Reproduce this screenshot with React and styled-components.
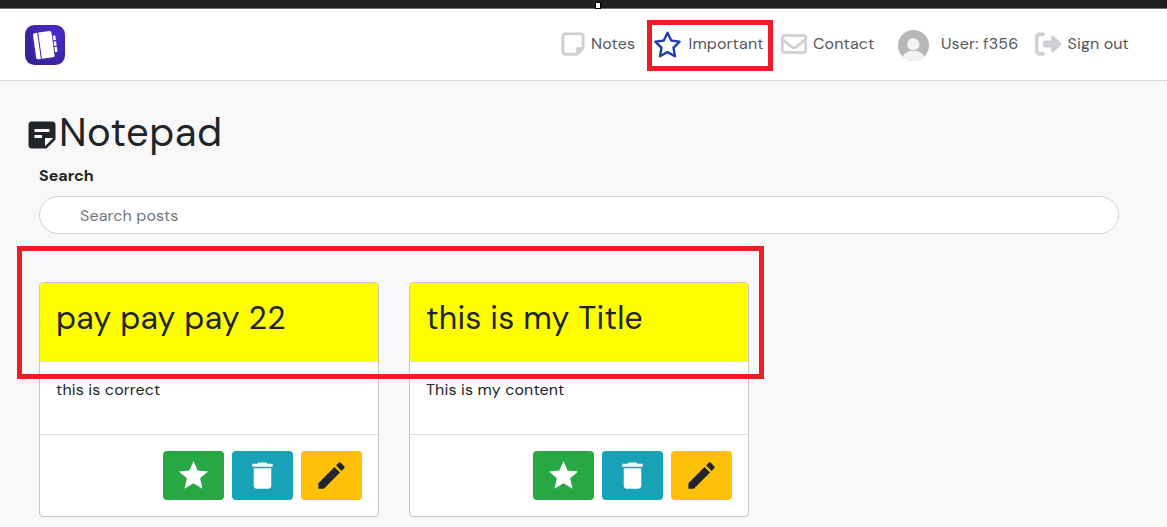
import React from "react";
import styled, { createGlobalStyle } from "styled-components";
import { FaRegNoteSticky, FaRegStar, FaRegEnvelope, FaRightFromBracket } from "react-icons/fa6";
import { MdStickyNote2, MdStar, MdDelete, MdEdit } from "react-icons/md";

const GlobalStyle = createGlobalStyle`
  *, *::before, *::after { box-sizing: border-box; }
  html, body { margin: 0; background: #f8f8f8; overflow: hidden; }
  body {
    font-family: "DM Sans", Lato, "Open Sans", sans-serif;
    font-optical-sizing: none;
    font-size: 16px;
    line-height: 24px;
    color: #212529;
  }
  h1, h2, p { margin: 0; font-weight: 400; }
`;

const Page = styled.div`
  position: relative;
  height: 527px;
  overflow: hidden;
  background: #f8f8f8;
`;

const TopStrip = styled.div`
  height: 9px;
  background: #202020;
  border-bottom: 1px solid #6f6f6f;
`;

const Handle = styled.span`
  position: absolute;
  top: 2px;
  left: 595px;
  width: 6px;
  height: 7px;
  border: 1px solid #000;
  background: #fff;
`;

const Navbar = styled.header`
  display: flex;
  align-items: center;
  justify-content: space-between;
  height: 72px;
  padding: 1px 38px 0 25px;
  background: #fff;
  border-bottom: 1px solid #d9d9e0;
`;

const Nav = styled.nav`
  display: flex;
  align-items: center;
  height: 31px;
`;

const NavItem = styled.a`
  display: flex;
  align-items: center;
  flex: none;
  width: ${(p) => p.$width}px;
  gap: ${(p) => p.$gap}px;
  color: #55565a;
  letter-spacing: 0.14px;
  white-space: nowrap;
`;

const NavIcon = styled.span`
  display: flex;
  flex: none;
  margin-top: -2px;
  color: ${(p) => (p.$active ? "#1e40af" : "#cfcfd4")};

  path { stroke-width: ${(p) => (p.$active ? 0 : 8)}px; }
`;

const NavText = styled.span`
  margin-top: -2px;
`;

const Main = styled.main`
  padding: 27px 48px 0 39px;
`;

const Heading = styled.div`
  display: flex;
  align-items: center;
  height: 48px;
  margin-left: -15.5px;

  svg { margin-top: 6px; }
`;

const Title = styled.h1`
  margin-left: -0.5px;
  font-size: 40px;
  line-height: 48px;
  letter-spacing: 0.45px;
`;

const Label = styled.label`
  display: block;
  height: 24px;
  margin: 8px 0;
  font-weight: 700;
`;

const SearchInput = styled.input`
  display: block;
  width: 100%;
  height: 38px;
  padding: 0 40px;
  border: 1px solid #ced4da;
  border-radius: 25px;
  background: #fff;
  font: inherit;
  font-optical-sizing: inherit;
  letter-spacing: 0.14px;
  outline: none;

  &::placeholder { color: #6c757d; opacity: 1; }
`;

const Cards = styled.section`
  display: grid;
  grid-template-columns: 340px 340px;
  gap: 30px;
  margin-top: 48px;
`;

const Card = styled.article`
  display: flex;
  flex-direction: column;
  height: 235px;
  border: 1px solid #c6c6c6;
  border-radius: 4px;
  background: #fff;
  overflow: hidden;
`;

const CardHeader = styled.div`
  height: 79px;
  padding: 16px;
  background: #ff0;
  border-bottom: 1px solid #dfdfdf;
`;

const CardTitle = styled.h2`
  font-size: 32px;
  line-height: 38px;
  letter-spacing: 0.23px;
  white-space: nowrap;
`;

const CardBody = styled.p`
  height: 72px;
  padding: 16px;
  letter-spacing: 0.14px;
`;

const CardFooter = styled.div`
  display: flex;
  justify-content: flex-end;
  align-items: center;
  gap: 8px;
  flex: 1;
  padding: 0 16px;
  border-top: 1px solid #dfdfe2;
`;

const ActionButton = styled.button`
  display: grid;
  place-items: center;
  width: 61px;
  height: 49px;
  padding: 0;
  border: 0;
  border-radius: 4px;
  background: ${(p) => p.$bg};
  color: ${(p) => p.$fg || "#fff"};
`;

const Highlight = styled.div`
  position: absolute;
  left: ${(p) => p.$x}px;
  top: ${(p) => p.$y}px;
  width: ${(p) => p.$w}px;
  height: ${(p) => p.$h}px;
  border: 5px solid #ee1c24;
  pointer-events: none;
`;

const Logo = () => (
  <svg width="40" height="40" viewBox="0 0 40 40">
    <defs>
      <radialGradient id="logoFill" cx="0.72" cy="0.3" r="0.9">
        <stop offset="0" stopColor="#4b2ccb" />
        <stop offset="1" stopColor="#35218f" />
      </radialGradient>
    </defs>
    <rect width="40" height="40" rx="9.5" fill="url(#logoFill)" />
    <g transform="rotate(-8 20 20)" fill="#fff">
      <path d="M11.3 6.8H14v26.4h-2.7a1.8 1.8 0 0 1-1.8-1.8V8.6a1.8 1.8 0 0 1 1.8-1.8z" />
      <path d="M15 6.8h11.3a1.8 1.8 0 0 1 1.8 1.8v22.8a1.8 1.8 0 0 1-1.8 1.8H15z" />
      <path d="M29 12h1.6q.9 0 .9.9V16.5H29zM29 17.8h2.5v4.4H29zM29 23.5h2.5v4.1q0 .9-.9.9H29z" />
    </g>
  </svg>
);

const Avatar = () => (
  <svg width="31" height="31" viewBox="0 0 31 31">
    <defs>
      <clipPath id="avatarClip">
        <circle cx="15.5" cy="15.5" r="15.5" />
      </clipPath>
    </defs>
    <g clipPath="url(#avatarClip)">
      <rect width="31" height="31" fill="#b7b7b7" />
      <ellipse cx="15.5" cy="30" rx="11.5" ry="9.5" fill="#f3f3f3" />
      <circle cx="15.3" cy="14.3" r="6.6" fill="#f3f3f3" stroke="#b7b7b7" strokeWidth="1" />
    </g>
  </svg>
);

const notes = [
  { title: "pay pay pay 22", body: "this is correct" },
  { title: "this is my Title", body: "This is my content" },
];

export default function App() {
  return (
    <Page>
      <GlobalStyle />
      <TopStrip />
      <Handle />
      <Navbar>
        <Logo />
        <Nav>
          <NavItem $width={93} $gap={5}>
            <NavIcon><FaRegNoteSticky size={26} /></NavIcon>
            <NavText>Notes</NavText>
          </NavItem>
          <NavItem $width={128} $gap={6.5}>
            <NavIcon $active><FaRegStar size={29} /></NavIcon>
            <NavText>Important</NavText>
          </NavItem>
          <NavItem $width={117} $gap={6}>
            <NavIcon><FaRegEnvelope size={26} /></NavIcon>
            <NavText>Contact</NavText>
          </NavItem>
          <NavItem $width={137} $gap={12}>
            <Avatar />
            <NavText>User: f356</NavText>
          </NavItem>
          <NavItem $width={94} $gap={6.5}>
            <NavIcon><FaRightFromBracket size={26} /></NavIcon>
            <NavText>Sign out</NavText>
          </NavItem>
        </Nav>
      </Navbar>
      <Main>
        <Heading>
          <MdStickyNote2 size={36} />
          <Title>Notepad</Title>
        </Heading>
        <Label htmlFor="search">Search</Label>
        <SearchInput id="search" placeholder="Search posts" />
        <Cards>
          {notes.map((n) => (
            <Card key={n.title}>
              <CardHeader>
                <CardTitle>{n.title}</CardTitle>
              </CardHeader>
              <CardBody>{n.body}</CardBody>
              <CardFooter>
                <ActionButton $bg="#28a745" aria-label="Mark important">
                  <MdStar size={35} />
                </ActionButton>
                <ActionButton $bg="#17a2b8" aria-label="Delete">
                  <MdDelete size={35} />
                </ActionButton>
                <ActionButton $bg="#ffc107" $fg="#212529" aria-label="Edit">
                  <MdEdit size={35} />
                </ActionButton>
              </CardFooter>
            </Card>
          ))}
        </Cards>
      </Main>
      <Highlight $x={647} $y={20} $w={126} $h={51} />
      <Highlight $x={17} $y={246} $w={747} $h={133} />
    </Page>
  );
}
